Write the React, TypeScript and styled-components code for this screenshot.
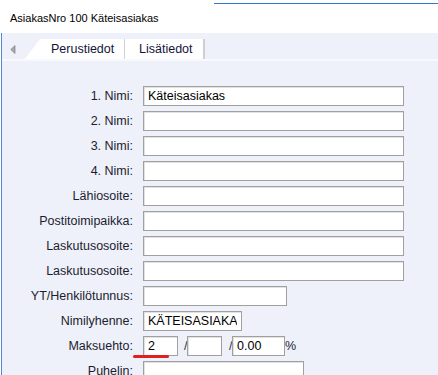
import React from "react";
import styled, { createGlobalStyle } from "styled-components";

const Global = createGlobalStyle`
  html, body { margin: 0; padding: 0; background: #ffffff; }
  #root { width: 438px; height: 375px; overflow: hidden; }
  * { box-sizing: border-box; }
`;

const Window = styled.div`
  width: 438px;
  height: 375px;
  display: flex;
  flex-direction: column;
  background: #ffffff;
  font-family: "Liberation Sans", Arial, sans-serif;
  overflow: hidden;
`;

const TitleBar = styled.div`
  height: 33px;
  flex: none;
  display: flex;
  align-items: center;
  padding-left: 10px;
  padding-top: 2px;
  font-size: 11px;
  color: #000;
  background:
    linear-gradient(#2b79d0, #2b79d0) no-repeat 214px 3px / calc(100% - 214px) 1px,
    #ffffff;
`;

const Body = styled.div`
  flex: 1;
  margin-left: 1px;
  border-left: 1px solid #5089d2;
  display: flex;
  flex-direction: column;
  background: #eef1f9;
`;

const TabStrip = styled.div`
  height: 28px;
  flex: none;
  display: flex;
  align-items: flex-end;
  padding-top: 6px;
  border-bottom: 2px solid #f8f9fd;
`;

const ScrollArrow = styled.div`
  width: 23px;
  align-self: stretch;
  display: flex;
  align-items: center;
  padding-left: 8px;
`;

const Tab = styled.div<{ $first?: boolean }>`
  height: 20px;
  display: flex;
  align-items: center;
  background: #ffffff;
  font-size: 12.5px;
  color: #14143a;
  padding-left: ${(p) => (p.$first ? "26px" : "14px")};
  width: ${(p) => (p.$first ? "100px" : "80px")};
  border-right: ${(p) => (p.$first ? "1.5px solid #d2d2d2" : "2px solid #cfcfcf")};
  clip-path: ${(p) =>
    p.$first ? "polygon(15px 0, 100% 0, 100% 100%, 0 100%)" : "none"};
`;

const Panel = styled.div`
  flex: 1;
  padding-top: 25px;
`;

const Form = styled.div`
  display: grid;
  grid-template-columns: 131px auto;
  column-gap: 10px;
  row-gap: 5px;
  align-items: center;
`;

const Label = styled.div`
  text-align: right;
  font-size: 12.5px;
  color: #1c1c30;
  white-space: nowrap;
`;

const Field = styled.input<{ $w: number }>`
  width: ${(p) => p.$w}px;
  height: 20px;
  margin: 0;
  padding: 0 4px;
  border: 1px solid #a0a0a0;
  box-shadow: inset 1px 1px 0 #e2e2e2;
  background: #ffffff;
  font-family: "Liberation Sans", Arial, sans-serif;
  font-size: 12.5px;
  color: #000;
  outline: none;
`;

const InlineGroup = styled.div`
  position: relative;
  display: flex;
  align-items: center;
  font-size: 12.5px;
  color: #1c1c30;
`;

const Slash = styled.span<{ $pad: number }>`
  padding-left: ${(p) => p.$pad}px;
  width: ${(p) => p.$pad + 3}px;
  color: #333;
`;

const Mark = styled.span`
  position: absolute;
  left: -10px;
  top: 19px;
  width: 36px;
  height: 2.5px;
  border-radius: 2px;
  background: #e0201e;
`;

const rows: { label: string; w: number; value?: string }[] = [
  { label: "1. Nimi:", w: 261, value: "Käteisasiakas" },
  { label: "2. Nimi:", w: 261 },
  { label: "3. Nimi:", w: 261 },
  { label: "4. Nimi:", w: 261 },
  { label: "Lähiosoite:", w: 261 },
  { label: "Postitoimipaikka:", w: 261 },
  { label: "Laskutusosoite:", w: 261 },
  { label: "Laskutusosoite:", w: 261 },
  { label: "YT/Henkilötunnus:", w: 144 },
  { label: "Nimilyhenne:", w: 99, value: "KÄTEISASIAKAS" },
];

export default function App() {
  return (
    <>
      <Global />
      <Window>
        <TitleBar>AsiakasNro 100 Käteisasiakas</TitleBar>
        <Body>
          <TabStrip>
            <ScrollArrow>
              <svg width="6" height="9" viewBox="0 0 6 9">
                <polygon points="5,0.5 0.8,4.5 5,8.5" fill="#a8a8a8" stroke="#8c8c8c" strokeWidth="0.8" />
              </svg>
            </ScrollArrow>
            <Tab $first>Perustiedot</Tab>
            <Tab>Lisätiedot</Tab>
          </TabStrip>
          <Panel>
            <Form>
              {rows.map((r, i) => (
                <React.Fragment key={i}>
                  <Label>{r.label}</Label>
                  <div>
                    <Field $w={r.w} readOnly value={r.value ?? ""} />
                  </div>
                </React.Fragment>
              ))}
              <Label>Maksuehto:</Label>
              <InlineGroup>
                <Field $w={35} readOnly value="2" />
                <Slash $pad={6}>/</Slash>
                <Field $w={35} readOnly value="" />
                <Slash $pad={7}>/</Slash>
                <Field $w={53} readOnly value="0.00" />
                <span>%</span>
                <Mark />
              </InlineGroup>
              <Label>Puhelin:</Label>
              <div>
                <Field $w={161} readOnly value="" />
              </div>
            </Form>
          </Panel>
        </Body>
      </Window>
    </>
  );
}
